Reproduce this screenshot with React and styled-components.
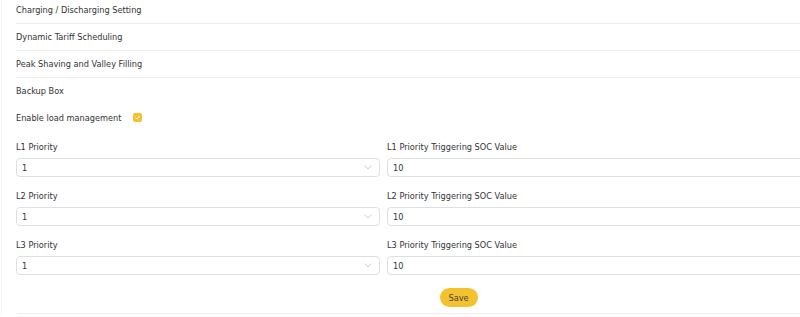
import React from 'react';
import styled, { createGlobalStyle } from 'styled-components';

const GlobalStyle = createGlobalStyle`
  html, body {
    margin: 0;
    padding: 0;
    background: #fff;
    overflow: hidden;
  }
  body {
    font-family: "DejaVu Sans", Verdana, sans-serif;
    color: #333;
  }
`;

// Page frame, wider than the window like the original
const Page = styled.div`
  width: 914px;
  margin-left: 1px;
  border-left: 1px solid #f4f4f4;
  padding: 0 15px 0 14px;
  box-sizing: border-box;
  min-height: 317px;
`;

const MenuRow = styled.div`
  height: 25px;
  display: flex;
  align-items: center;
  font-size: 8.2px;
  color: #333;
  border-bottom: 1px solid #ededed;
  padding-bottom: 1px;
  box-sizing: content-box;
  margin-top: ${p => (p.first ? '-3px' : '0')};
`;

const PlainRow = styled.div`
  height: 27px;
  display: flex;
  align-items: center;
  gap: 12px;
  font-size: 8.2px;
  color: #333;
  margin-top: ${p => (p.first ? '-1px' : '0')};
`;

const Check = styled.span`
  width: 9px;
  height: 9px;
  border-radius: 2px;
  background: #f5c12e;
  display: inline-flex;
  align-items: center;
  justify-content: center;
`;

const Grid = styled.div`
  display: grid;
  grid-template-columns: 364px 1fr;
  column-gap: 7px;
  row-gap: 13px;
  margin-top: 10px;
`;

const Field = styled.div`
  display: flex;
  flex-direction: column;
  gap: 5px;
`;

const Label = styled.label`
  font-size: 8.2px;
  color: #333;
  line-height: 12px;
`;

const Box = styled.div`
  height: 19px;
  border: 1px solid #dcdfe6;
  border-radius: 4px;
  box-sizing: border-box;
  display: flex;
  align-items: center;
  justify-content: space-between;
  padding: 0 7px 0 5px;
  font-size: 8.2px;
  color: #333;
`;

const Footer = styled.div`
  display: flex;
  justify-content: center;
  padding: 13px 0 6px;
  border-bottom: 1px solid #f0f0f0;
  margin-left: 1px;
`;

const SaveButton = styled.button`
  width: 38px;
  height: 19px;
  border: none;
  border-radius: 10px;
  background: #f4c22f;
  color: #444;
  font-family: inherit;
  font-size: 8.2px;
  padding: 0;
  cursor: pointer;
`;

const Chevron = () => (
  <svg width="8" height="5" viewBox="0 0 8 5">
    <path d="M0.5 0.5 L4 4 L7.5 0.5" fill="none" stroke="#c0c4cc" strokeWidth="0.8" />
  </svg>
);

const levels = ['L1', 'L2', 'L3'];

export default function App() {
  return (
    <Page>
      <GlobalStyle />
      <MenuRow first>Charging / Discharging Setting</MenuRow>
      <MenuRow>Dynamic Tariff Scheduling</MenuRow>
      <MenuRow>Peak Shaving and Valley Filling</MenuRow>
      <PlainRow first>Backup Box</PlainRow>
      <PlainRow>
        Enable load management
        <Check>
          <svg width="7" height="7" viewBox="0 0 7 7">
            <path d="M1.5 3.6 L3 5 L5.6 2" fill="none" stroke="#fff" strokeWidth="1" />
          </svg>
        </Check>
      </PlainRow>
      <Grid>
        {levels.map(l => (
          <React.Fragment key={l}>
            <Field>
              <Label>{l} Priority</Label>
              <Box>
                <span>1</span>
                <Chevron />
              </Box>
            </Field>
            <Field>
              <Label>{l} Priority Triggering SOC Value</Label>
              <Box>10</Box>
            </Field>
          </React.Fragment>
        ))}
      </Grid>
      <Footer>
        <SaveButton>Save</SaveButton>
      </Footer>
    </Page>
  );
}
